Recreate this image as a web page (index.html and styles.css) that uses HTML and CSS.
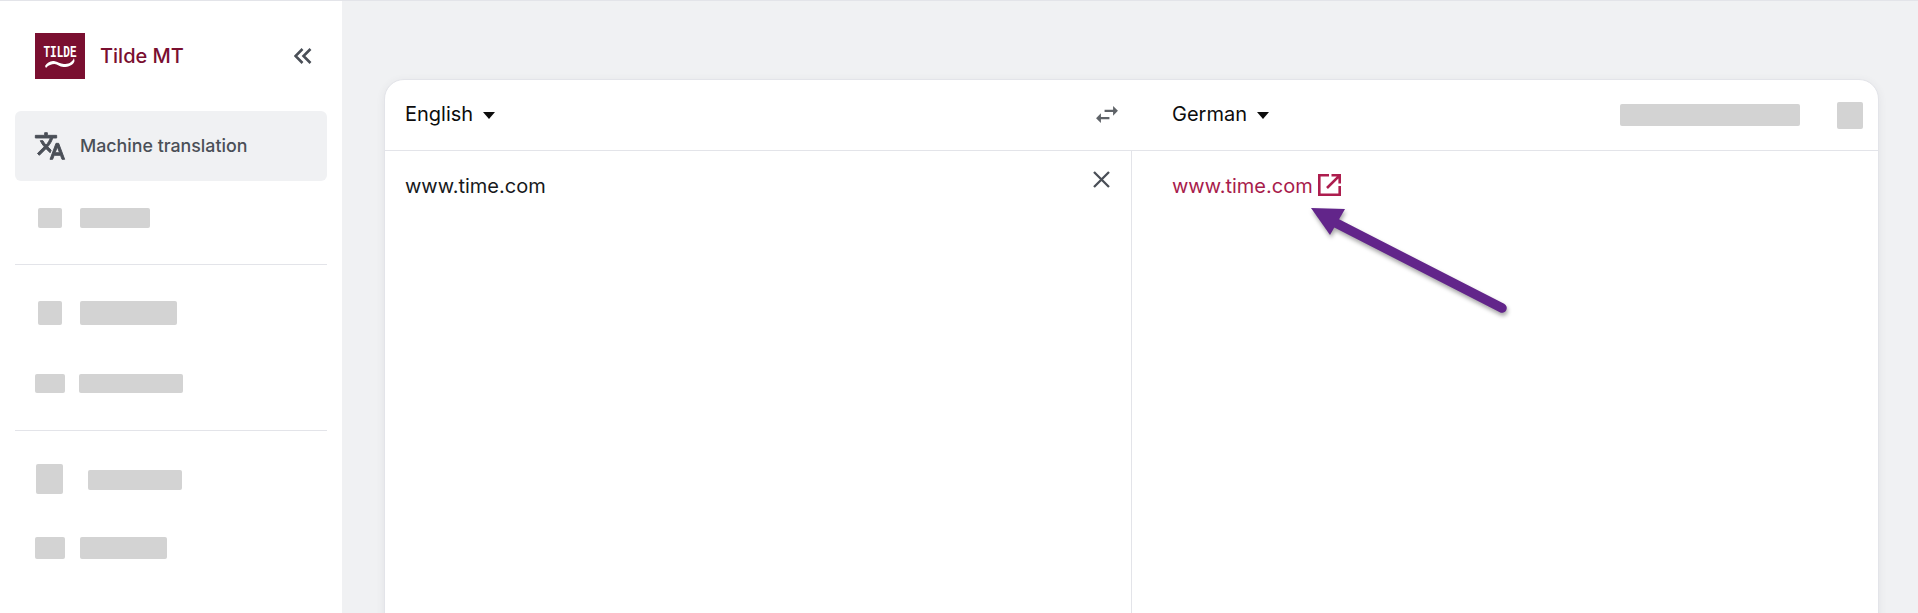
FILE: index.html
```html
<!DOCTYPE html>
<html lang="en">
<head>
<meta charset="utf-8">
<title>Tilde MT</title>
<link rel="stylesheet" href="styles.css">
</head>
<body>
<div class="app">
  <aside class="sidebar">
    <div class="brand">
      <svg class="logo" viewBox="0 0 50 46" width="50" height="46">
        <rect width="50" height="46" fill="#7a0f30"/>
        <text class="logo-text" transform="translate(25 24) scale(.65 1)" text-anchor="middle">TILDE</text>
        <path d="M10 33c2-3 5-5.500 9-5 4 .6 6 3 10 3 4 0 8-1 10-6l.5 3c-1 4-6 6-11 6-4 0-6-3-9-3-3 0-6 1-8.500 4z" fill="#fff"/>
      </svg>
      <span class="brand-name">Tilde MT</span>
      <svg class="collapse" viewBox="0 0 18 16" width="18" height="16"><path d="M8.500 1 1.500 8l7 7M16.500 1l-7 7 7 7" fill="none" stroke="#4a4f57" stroke-width="2.600"/></svg>
    </div>
    <nav class="nav">
      <a class="nav-active">
        <svg class="nav-icon" viewBox="0 0 24 24" width="32" height="32"><path fill="#4a4f57" stroke="#4a4f57" stroke-width=".7" d="M12.870 15.070l-2.540-2.510.03-.03c1.740-1.940 2.980-4.170 3.710-6.530H17V4h-7V2H8v2H1v1.990h11.170C11.500 7.920 10.440 9.750 9 11.350 8.070 10.320 7.300 9.190 6.690 8h-2c.73 1.630 1.730 3.170 2.980 4.560l-5.090 5.020L4 19l5-5 3.110 3.110.76-2.040zM18.500 10h-2L12 22h2l1.120-3h4.750L21 22h2l-4.500-12zm-2.620 7l1.620-4.330L19.120 17h-3.240z"/></svg>
        <span>Machine translation</span>
      </a>
      <div class="row row-a"><i class="sk sk-a1"></i><i class="sk sk-a2"></i></div>
      <hr class="rule rule-a">
      <div class="row row-b"><i class="sk sk-b1"></i><i class="sk sk-b2"></i></div>
      <div class="row row-c"><i class="sk sk-c1"></i><i class="sk sk-c2"></i></div>
      <hr class="rule rule-b">
      <div class="row row-d"><i class="sk sk-d1"></i><i class="sk sk-d2"></i></div>
      <div class="row row-e"><i class="sk sk-e1"></i><i class="sk sk-e2"></i></div>
    </nav>
  </aside>
  <main class="main">
    <section class="card">
      <header class="card-head">
        <div class="head-left">
          <div class="lang">English<b class="caret"></b></div>
          <svg class="swap" viewBox="3 5 18 14" width="22" height="17"><path fill="#5f6368" d="M6.990 11L3 15l3.990 4v-3H14v-2H6.990v-3zM21 9l-3.990-4v3H10v2h7.010v3L21 9z"/></svg>
        </div>
        <div class="head-right">
          <div class="lang">German<b class="caret"></b></div>
          <div class="head-tools"><i class="sk sk-tool1"></i><i class="sk sk-tool2"></i></div>
        </div>
      </header>
      <div class="panes">
        <div class="pane pane-left">
          <span class="source">www.time.com</span>
          <svg class="clear" viewBox="0 0 17 17" width="17" height="17"><path d="M1 1l15 15M16 1 1 16" stroke="#4a4f57" stroke-width="2.300" fill="none"/></svg>
        </div>
        <div class="pane pane-right">
          <a class="link">www.time.com</a>
          <svg class="ext" viewBox="0 0 23 22" width="23" height="22"><path d="M11 1.300H1.300v19.400h20.400V12M13.500 1.300h8.200v8.200M21.200 1.800 9 14" fill="none" stroke="#ad1d4e" stroke-width="2.600"/></svg>
        </div>
      </div>
    </section>
  </main>
</div>
<svg class="arrow" viewBox="0 0 220 120" width="220" height="120">
  <g class="arrow-g">
    <path d="M198 104 30 18" stroke="#62258a" stroke-width="9.500" stroke-linecap="round" fill="none"/>
    <path d="M7 4 41 5 26 31z" fill="#62258a"/>
  </g>
</svg>
</body>
</html>
```
FILE: styles.css
```css
* { box-sizing: border-box; }
html, body { margin: 0; height: 100%; }
body {
  position: relative;
  overflow: hidden;
  font-family: Inter, "Liberation Sans", sans-serif;
  background: #f0f1f3;
}
.app {
  display: flex;
  height: 613px;
  overflow: hidden;
  border-top: 1px solid #e3e4e9;
}
.sidebar {
  width: 342px;
  flex: none;
  background: #fff;
  padding: 32px 15px 0;
}
.brand {
  display: flex;
  align-items: center;
  height: 46px;
  padding-left: 20px;
}
.logo { flex: none; }
.logo-text {
  font-family: "Liberation Mono", monospace;
  font-size: 17px;
  font-weight: 700;
  fill: #fff;
}
.brand-name {
  margin-left: 15px;
  font-size: 20px;
  font-weight: 500;
  color: #7a0f30;
}
.collapse { margin-left: 110px; }
.nav { margin-top: 32px; }
.nav-active {
  display: flex;
  align-items: center;
  height: 70px;
  padding: 0 0 1px 19px;
  border-radius: 6px;
  background: #f0f1f3;
  font-size: 17.8px;
  font-weight: 500;
  color: #4a4f57;
}
.nav-active span { margin: 0 0 1px 14px; }
.row { display: flex; align-items: center; }
.rule { height: 1px; margin: 0; border: 0; background: #e3e4e9; }
.sk { display: block; flex: none; border-radius: 2px; background: #d3d3d3; }
.row-a { height: 20px; margin-top: 27px; padding-left: 23px; gap: 18px; }
.sk-a1 { width: 24px; height: 20px; }
.sk-a2 { width: 70px; height: 20px; }
.rule-a { margin-top: 36px; }
.row-b { height: 24px; margin-top: 36px; padding-left: 23px; gap: 18px; }
.sk-b1 { width: 24px; height: 24px; }
.sk-b2 { width: 97px; height: 24px; }
.row-c { height: 19px; margin-top: 49px; padding-left: 20px; gap: 14px; }
.sk-c1 { width: 30px; height: 19px; }
.sk-c2 { width: 104px; height: 19px; }
.rule-b { margin-top: 37px; }
.row-d { height: 30px; margin-top: 33px; padding-left: 21px; gap: 25px; }
.sk-d1 { width: 27px; height: 30px; }
.sk-d2 { width: 94px; height: 20px; margin-top: 2px; }
.row-e { height: 22px; margin-top: 43px; padding-left: 20px; gap: 15px; }
.sk-e1 { width: 30px; height: 22px; }
.sk-e2 { width: 87px; height: 22px; }
.main {
  flex: 1;
  min-width: 0;
  padding: 78px 39px 0 42px;
}
.card {
  height: 600px;
  border: 1px solid #e3e4e9;
  border-radius: 20px;
  background: #fff;
  box-shadow: 0 2px 8px rgba(60, 64, 80, .08);
}
.card-head {
  display: flex;
  height: 71px;
  border-bottom: 1px solid #e3e4e9;
}
.head-left {
  display: flex;
  align-items: center;
  justify-content: space-between;
  width: 787px;
  padding: 0 54px 0 20px;
}
.head-right {
  flex: 1;
  display: flex;
  align-items: center;
  justify-content: space-between;
  padding-right: 15px;
}
.head-tools { display: flex; align-items: center; gap: 37px; }
.sk-tool1 { width: 180px; height: 22px; }
.sk-tool2 { width: 26px; height: 27px; }
.lang { display: flex; align-items: center; font-size: 20px; color: #0d0d0d; margin-top: -2px; }
.caret {
  width: 0;
  height: 0;
  margin: 2px 0 0 10px;
  border-style: solid;
  border-width: 7px 6px 0;
  border-color: #0d0d0d transparent transparent;
}
.swap { margin-top: -2px; }
.panes { display: flex; height: 100%; }
.pane { position: relative; display: flex; align-items: flex-start; }
.pane-left {
  width: 747px;
  padding: 23px 0 0 20px;
  border-right: 1px solid #e3e4e9;
}
.pane-right { flex: 1; padding: 23px 0 0 40px; }
.source { font-size: 20px; line-height: 24px; color: #17191c; }
.clear { margin: 0 0 0 auto; position: relative; top: -3px; right: 21px; }
.link { font-size: 20px; line-height: 24px; color: #a81c4c; }
.ext { margin: 0 0 0 5px; }
.arrow {
  position: absolute;
  left: 1304px;
  top: 204px;
  overflow: visible;
}
.arrow-g { filter: drop-shadow(1px 3px 2px rgba(0, 0, 0, .35)); }
```
